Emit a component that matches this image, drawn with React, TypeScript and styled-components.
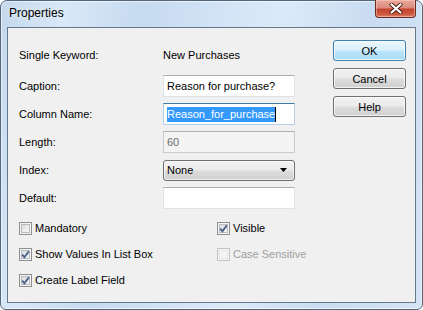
import React from "react";
import styled, { createGlobalStyle, css } from "styled-components";

const Global = createGlobalStyle`
  html, body { margin: 0; padding: 0; background: #ffffff; }
  body { width: 423px; height: 310px; overflow: hidden; }
`;

const Window = styled.div`
  box-sizing: border-box;
  width: 423px;
  height: 310px;
  border: 1px solid #52657a;
  border-radius: 7px 7px 6px 6px;
  background: linear-gradient(
    100deg,
    #c3d8ee 0%,
    #d9e8f7 14%,
    #c6daf0 30%,
    #d3e4f6 48%,
    #dbeaf8 60%,
    #c9dcf1 78%,
    #d4e4f4 100%
  );
  box-shadow: inset 0 0 0 1px rgba(255, 255, 255, 0.6);
  display: flex;
  flex-direction: column;
  padding: 0 6px 6px 6px;
  font-family: "Liberation Sans", Arial, sans-serif;
  color: #000;
`;

const TitleBar = styled.div`
  height: 26px;
  display: flex;
  align-items: flex-start;
  justify-content: space-between;
`;

const Title = styled.div`
  font-size: 12px;
  line-height: 14px;
  margin-top: 5px;
  padding-left: 2px;
  text-shadow: 0 0 6px rgba(255, 255, 255, 0.9);
`;

const CloseButton = styled.div`
  box-sizing: border-box;
  width: 41px;
  height: 18px;
  margin-top: -1px;
  border: 1px solid #6b2a22;
  border-top: none;
  border-radius: 0 0 4px 4px;
  background: linear-gradient(
    180deg,
    #e9a99c 0%,
    #dc8b7d 45%,
    #c2432f 55%,
    #cf5a40 85%,
    #e0886c 100%
  );
  box-shadow: inset 0 0 0 1px rgba(255, 210, 200, 0.5);
  display: flex;
  align-items: center;
  justify-content: center;
`;

const Client = styled.div`
  flex: 1;
  display: flex;
  border: 1px solid #66788c;
  background: #f0f0f0;
`;

const Form = styled.div`
  width: 276px;
  padding: 16px 0 0 11px;
  display: flex;
  flex-direction: column;
`;

const Fields = styled.div`
  display: flex;
  flex-direction: column;
  gap: 6px;
`;

const FieldRow = styled.div<{ $first?: boolean }>`
  display: grid;
  grid-template-columns: 144px 132px;
  align-items: center;
  height: 22px;
  font-size: 11px;
  ${(p) => p.$first && css`margin-bottom: 3px;`}
`;

const Label = styled.span`
  line-height: 13px;
  white-space: nowrap;
`;

const TextBox = styled.div<{ $focused?: boolean; $disabled?: boolean }>`
  box-sizing: border-box;
  height: 22px;
  border: 1px solid #dfe3e8;
  border-top-color: #abadb3;
  background: #ffffff;
  padding: 0 3px;
  display: flex;
  align-items: center;
  font-size: 11px;
  white-space: nowrap;
  ${(p) =>
    p.$focused &&
    css`
      border-color: #b5cfe7;
      border-top-color: #3d7bad;
    `}
  ${(p) =>
    p.$disabled &&
    css`
      background: #f4f4f4;
      border-color: #c9cbce;
      border-top-color: #adb2b5;
      color: #6d6d6d;
    `}
`;

const Selected = styled.span`
  background: #3399ff;
  color: #ffffff;
  line-height: 15px;
`;

const Caret = styled.span`
  display: inline-block;
  width: 1px;
  height: 15px;
  background: #000;
`;

const Select = styled.div`
  box-sizing: border-box;
  height: 21px;
  border: 1px solid #707070;
  border-radius: 3px;
  background: linear-gradient(180deg, #f2f2f2 0%, #ebebeb 48%, #dddddd 52%, #cfcfcf 100%);
  box-shadow: inset 0 0 0 1px rgba(255, 255, 255, 0.6);
  padding: 0 7px 0 3px;
  display: flex;
  align-items: center;
  justify-content: space-between;
  font-size: 11px;
`;

const CheckGrid = styled.div`
  margin-top: 13px;
  display: grid;
  grid-template-columns: 198px 1fr;
  row-gap: 13px;
  font-size: 11px;
`;

const CheckItem = styled.div<{ $disabled?: boolean }>`
  display: flex;
  align-items: center;
  gap: 3px;
  height: 13px;
  line-height: 13px;
  white-space: nowrap;
  color: ${(p) => (p.$disabled ? "#a0a0a0" : "#000")};
`;

const Box = styled.span<{ $disabled?: boolean }>`
  box-sizing: border-box;
  flex: none;
  width: 13px;
  height: 13px;
  border: 1px solid ${(p) => (p.$disabled ? "#c4c4c4" : "#8e8f8f")};
  background: ${(p) =>
    p.$disabled
      ? "#f4f4f4"
      : "linear-gradient(135deg, #d3d5d8 0%, #ececec 55%, #fbfbfb 100%)"};
  box-shadow: inset 0 0 0 1px #f4f4f4,
    inset 0 0 0 2px ${(p) => (p.$disabled ? "#e6e6e6" : "#b8bcc2")};
  display: flex;
  align-items: center;
  justify-content: center;
`;

const Buttons = styled.div`
  margin-left: 38px;
  padding-top: 12px;
  display: flex;
  flex-direction: column;
  gap: 7px;
`;

const Button = styled.div<{ $default?: boolean }>`
  box-sizing: border-box;
  width: 73px;
  height: 21px;
  border: 1px solid #707070;
  border-radius: 3px;
  background: linear-gradient(180deg, #f2f2f2 0%, #ebebeb 48%, #dddddd 52%, #cfcfcf 100%);
  box-shadow: inset 0 0 0 1px rgba(255, 255, 255, 0.75);
  display: flex;
  align-items: center;
  justify-content: center;
  font-size: 11px;
  ${(p) =>
    p.$default &&
    css`
      border-color: #3c7fb1;
      background: linear-gradient(180deg, #eaf6fd 0%, #d9f0fc 48%, #bee6fd 52%, #a7d9f5 100%);
      box-shadow: inset 0 0 0 1px rgba(255, 255, 255, 0.8);
    `}
`;

const Check = ({ checked, disabled, label }: { checked?: boolean; disabled?: boolean; label: string }) => (
  <CheckItem $disabled={disabled}>
    <Box $disabled={disabled}>
      {checked && (
        <svg width="9" height="9" viewBox="0 0 9 9">
          <path d="M1.2 4.6 L3.4 7.2 L7.8 1.4" fill="none" stroke="#4a5f87" strokeWidth="1.8" />
        </svg>
      )}
    </Box>
    <span>{label}</span>
  </CheckItem>
);

export default function App() {
  return (
    <>
      <Global />
      <Window>
        <TitleBar>
          <Title>Properties</Title>
          <CloseButton>
            <svg width="14" height="11" viewBox="0 0 14 11">
              <path d="M2.5 1.5 L11.5 9.5 M11.5 1.5 L2.5 9.5" stroke="#4b1d16" strokeWidth="4" strokeLinecap="round" />
              <path d="M2.5 1.5 L11.5 9.5 M11.5 1.5 L2.5 9.5" stroke="#ffffff" strokeWidth="2.2" strokeLinecap="round" />
            </svg>
          </CloseButton>
        </TitleBar>
        <Client>
          <Form>
            <Fields>
              <FieldRow $first>
                <Label>Single Keyword:</Label>
                <Label>New Purchases</Label>
              </FieldRow>
              <FieldRow>
                <Label>Caption:</Label>
                <TextBox>Reason for purchase?</TextBox>
              </FieldRow>
              <FieldRow>
                <Label>Column Name:</Label>
                <TextBox $focused>
                  <Selected>Reason_for_purchase</Selected>
                  <Caret />
                </TextBox>
              </FieldRow>
              <FieldRow>
                <Label>Length:</Label>
                <TextBox $disabled>60</TextBox>
              </FieldRow>
              <FieldRow>
                <Label>Index:</Label>
                <Select>
                  <span>None</span>
                  <svg width="7" height="4" viewBox="0 0 7 4">
                    <polygon points="0,0 7,0 3.5,4" fill="#000" />
                  </svg>
                </Select>
              </FieldRow>
              <FieldRow>
                <Label>Default:</Label>
                <TextBox />
              </FieldRow>
            </Fields>
            <CheckGrid>
              <Check label="Mandatory" />
              <Check label="Visible" checked />
              <Check label="Show Values In List Box" checked />
              <Check label="Case Sensitive" disabled />
              <Check label="Create Label Field" checked />
            </CheckGrid>
          </Form>
          <Buttons>
            <Button $default>OK</Button>
            <Button>Cancel</Button>
            <Button>Help</Button>
          </Buttons>
        </Client>
      </Window>
    </>
  );
}
